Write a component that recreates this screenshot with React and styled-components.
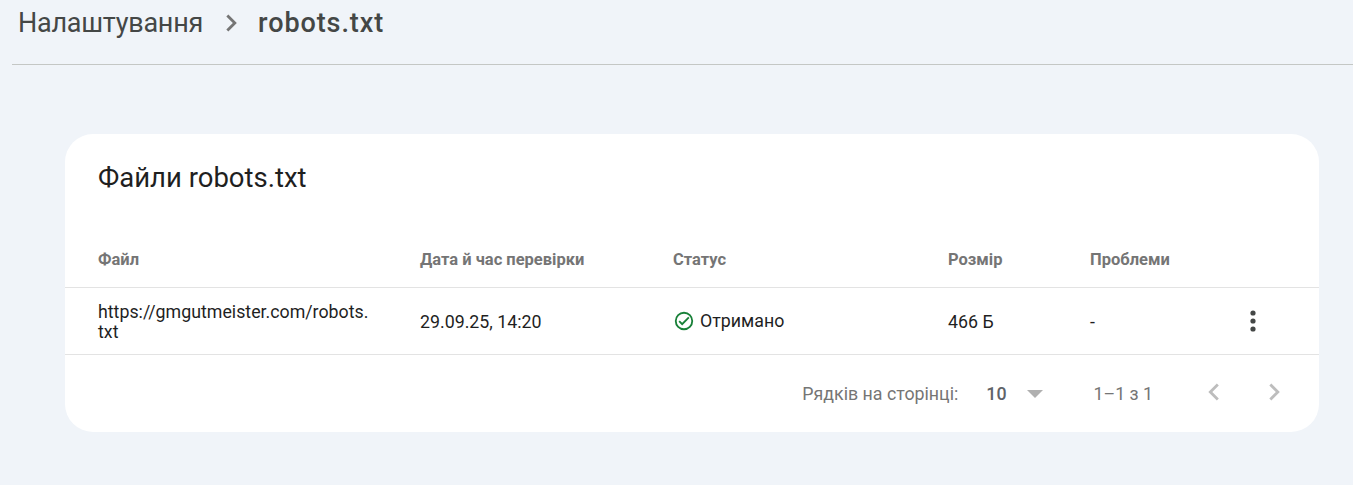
import React from 'react'
import styled, { createGlobalStyle } from 'styled-components'

const GlobalStyle = createGlobalStyle`
  html, body {
    margin: 0;
    padding: 0;
    height: 100%;
    background: #f0f4f9;
    font-family: Roboto, "Noto Sans", sans-serif;
    overflow: hidden;
  }
`

const Page = styled.div`
  height: 485px;
  display: flex;
  flex-direction: column;
`
const Breadcrumbs = styled.header`
  height: 64px;
  margin-left: 12px;
  padding: 0 0 0 6px;
  border-bottom: 1px solid #c4c7c5;
  box-sizing: content-box;
`
const CrumbRow = styled.div`
  height: 46px;
  display: flex;
  align-items: center;
  font-size: 27px;
  color: #444746;
`
const Crumb = styled.span`
  font-weight: ${p => (p.$current ? 500 : 400)};
  letter-spacing: ${p => (p.$current ? '0.9px' : '-0.25px')};
`
const CrumbSep = styled.svg`
  width: 34px;
  height: 34px;
  margin: 0 9px 0 12px;
  fill: #757575;
`
const Card = styled.section`
  width: 1254px;
  height: 298px;
  margin: 69px 0 0 65px;
  background: #fff;
  border-radius: 28px;
  display: flex;
  flex-direction: column;
`
const CardTitle = styled.h2`
  margin: 0;
  height: 104px;
  padding: 28px 0 0 33px;
  box-sizing: border-box;
  font-size: 27.5px;
  line-height: 32px;
  font-weight: 400;
  color: #1f1f1f;
`
const Row = styled.div`
  display: grid;
  grid-template-columns: 322px 253px 275px 142px 1fr;
  padding-left: 33px;
  align-items: center;
  border-bottom: 1px solid #e3e3e3;
  height: ${p => p.$height}px;
  box-sizing: border-box;
`
const HeadRow = styled(Row)`
  padding-bottom: 6px;
`
const BodyRow = styled(Row)`
  padding-top: 1px;
`
const HeadCell = styled.div`
  font-size: 16.5px;
  font-weight: 700;
  color: #757575;
`
const Cell = styled.div`
  font-size: 17.8px;
  line-height: 20px;
  color: #1f1f1f;
  display: flex;
  align-items: center;
`
const UrlCell = styled(Cell)`
  width: 275px;
  word-break: break-all;
`
const StatusCell = styled(Cell)`
  margin-top: -2px;
`
const StatusIcon = styled.svg`
  width: 22px;
  height: 22px;
  margin-right: 5px;
  flex: none;
`
const LastCell = styled(Cell)`
  justify-content: space-between;
  padding-right: 54px;
`
const MoreIcon = styled.svg`
  width: 24px;
  height: 24px;
  margin-top: -2px;
  fill: #444746;
`
const Footer = styled.footer`
  flex: 1;
  display: flex;
  align-items: center;
  justify-content: flex-end;
  padding: 0 27px 0 0;
  font-size: 17.8px;
  color: #757575;
`
const PageSize = styled.span`
  margin-left: 28px;
  font-weight: 500;
  color: #5f6368;
`
const Caret = styled.span`
  width: 0;
  height: 0;
  margin: 1px 0 0 20px;
  border-left: 8px solid transparent;
  border-right: 8px solid transparent;
  border-top: 8px solid #b0b0b0;
`
const Range = styled.span`
  margin-left: 51px;
`
const PagerIcon = styled.svg`
  width: 34px;
  height: 34px;
  margin-left: ${p => p.$gap}px;
  margin-top: -4px;
  fill: #bdbdbd;
`

const App = () => (
  <Page>
    <GlobalStyle />
    <Breadcrumbs>
      <CrumbRow>
        <Crumb>Налаштування</Crumb>
        <CrumbSep viewBox="0 0 24 24"><path d="M9.4 18 8 16.6l4.6-4.6L8 7.4 9.4 6l6 6z" /></CrumbSep>
        <Crumb $current>robots.txt</Crumb>
      </CrumbRow>
    </Breadcrumbs>
    <Card>
      <CardTitle>Файли robots.txt</CardTitle>
      <HeadRow $height={50}>
        <HeadCell>Файл</HeadCell>
        <HeadCell>Дата й час перевірки</HeadCell>
        <HeadCell>Статус</HeadCell>
        <HeadCell>Розмір</HeadCell>
        <HeadCell>Проблеми</HeadCell>
      </HeadRow>
      <BodyRow $height={67}>
        <UrlCell>https://gmgutmeister.com/robots.txt</UrlCell>
        <Cell>29.09.25, 14:20</Cell>
        <StatusCell>
          <StatusIcon viewBox="0 0 24 24" fill="#188038">
            <path d="M12 2a10 10 0 1 0 0 20 10 10 0 0 0 0-20zm0 18a8 8 0 1 1 0-16 8 8 0 0 1 0 16zm4.6-12.6L10 14l-2.6-2.6L6 12.8l4 4 8-8z" />
          </StatusIcon>
          Отримано
        </StatusCell>
        <Cell>466 Б</Cell>
        <LastCell>
          -
          <MoreIcon viewBox="0 0 24 24">
            <circle cx="12" cy="4" r="2.6" />
            <circle cx="12" cy="12" r="2.6" />
            <circle cx="12" cy="20" r="2.6" />
          </MoreIcon>
        </LastCell>
      </BodyRow>
      <Footer>
        Рядків на сторінці:
        <PageSize>10</PageSize>
        <Caret />
        <Range>1–1 з 1</Range>
        <PagerIcon $gap={44} viewBox="0 0 24 24"><path d="M15.4 7.4 14 6l-6 6 6 6 1.4-1.4-4.6-4.6z" /></PagerIcon>
        <PagerIcon $gap={27} viewBox="0 0 24 24"><path d="M9.4 18 8 16.6l4.6-4.6L8 7.4 9.4 6l6 6z" /></PagerIcon>
      </Footer>
    </Card>
  </Page>
)

export default App
